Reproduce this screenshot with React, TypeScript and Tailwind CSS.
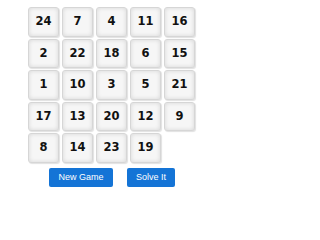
import React from "react";

const tiles: (number | null)[] = [
  24, 7, 4, 11, 16,
  2, 22, 18, 6, 15,
  1, 10, 3, 5, 21,
  17, 13, 20, 12, 9,
  8, 14, 23, 19, null,
];

export default function App() {
  return (
    <div className="w-[226px] h-[200px] bg-white pt-[7px]">
      <div className="ml-[28px] grid grid-cols-[repeat(5,31px)] grid-rows-[repeat(5,29.5px)] gap-x-[3px] gap-y-[2px]">
        {tiles.map((t, i) =>
          t === null ? (
            <div key={i} />
          ) : (
            <div
              key={i}
              className="flex items-center justify-center rounded-[3px] border border-[#d6d6d6] bg-[#f6f6f6] shadow-[inset_0_0_4px_rgba(0,0,0,0.13),1px_1px_1px_rgba(0,0,0,0.12)] text-[11.5px] font-bold text-[#111] [font-family:'DejaVu_Sans',Verdana,sans-serif]"
            >
              {t}
            </div>
          )
        )}
      </div>
      <div className="mt-[5.5px] flex justify-center gap-[14px] pr-[2px] [font-family:'Liberation_Sans',Arial,sans-serif]">
        <button className="h-[19px] w-[64px] rounded-[2px] bg-[#1474d6] text-[9px] text-white">
          New Game
        </button>
        <button className="h-[19px] w-[48px] rounded-[2px] bg-[#1474d6] text-[9px] text-white">
          Solve It
        </button>
      </div>
    </div>
  );
}
